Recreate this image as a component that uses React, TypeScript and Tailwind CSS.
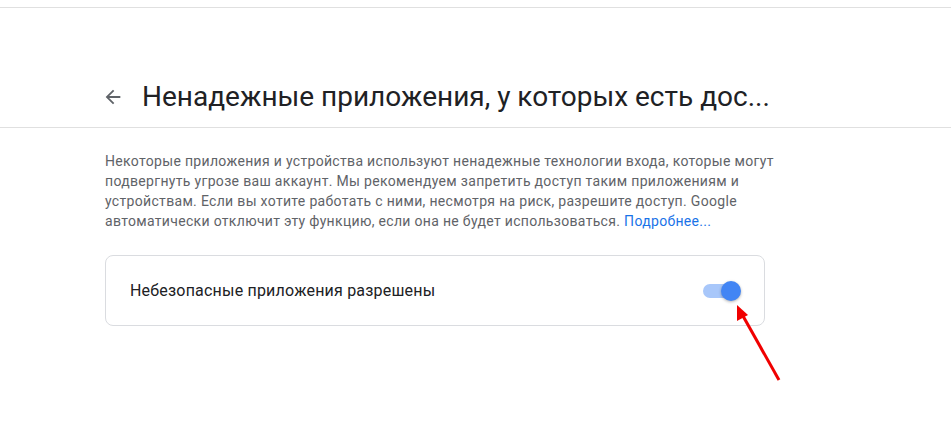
export default function App() {
  return (
    <div className="relative w-[951px] h-[430px] bg-white overflow-hidden font-['Roboto',_'Liberation_Sans',_sans-serif]">
      <div className="h-[7px]" />
      <div className="h-[121px] border-t border-b border-[#e0e0e0] flex items-end">
        <div className="flex items-center pl-[102px] pb-[12px]">
          <svg width="22" height="22" viewBox="0 0 24 24" className="text-[#5f6368]">
            <path d="M20 11H7.83l5.59-5.59L12 4l-8 8 8 8 1.41-1.41L7.83 13H20v-2z" fill="currentColor" />
          </svg>
          <h1 className="ml-[18px] text-[28px] leading-[36px] text-[#202124] whitespace-nowrap">
            Ненадежные приложения, у которых есть дос...
          </h1>
        </div>
      </div>

      <div className="pl-[105px] w-[820px]">
        <p className="mt-[23px] text-[14px] leading-[20px] tracking-[0.32px] text-[#5f6368]">
          Некоторые приложения и устройства используют ненадежные технологии входа, которые могут
          <br />
          подвергнуть угрозе ваш аккаунт. Мы рекомендуем запретить доступ таким приложениям и
          <br />
          устройствам. Если вы хотите работать с ними, несмотря на риск, разрешите доступ. Google
          <br />
          автоматически отключит эту функцию, если она не будет использоваться.{" "}
          <a className="text-[#1a73e8]">Подробнее...</a>
        </p>

        <div className="mt-[24px] w-[660px] h-[71px] border border-[#dadce0] rounded-[8px] flex items-center justify-between pl-[24px] pr-[23px]">
          <span className="text-[16px] tracking-[0.2px] text-[#202124]">Небезопасные приложения разрешены</span>
          <div className="relative w-[38px] h-[20px] flex items-center">
            <div className="w-[36px] h-[14px] rounded-full bg-[#a8c7fa]" />
            <div className="absolute right-0 top-0 w-[20px] h-[20px] rounded-full bg-[#4285f4] shadow-[0_1px_3px_rgba(0,0,0,0.3)]" />
          </div>
        </div>
      </div>

      <svg className="absolute left-0 top-0 pointer-events-none" width="951" height="430">
        <line x1="779" y1="380" x2="743" y2="316" stroke="#f00000" strokeWidth="3" />
        <polygon points="737,305 737,321 748,315" fill="#f00000" />
      </svg>
    </div>
  );
}
